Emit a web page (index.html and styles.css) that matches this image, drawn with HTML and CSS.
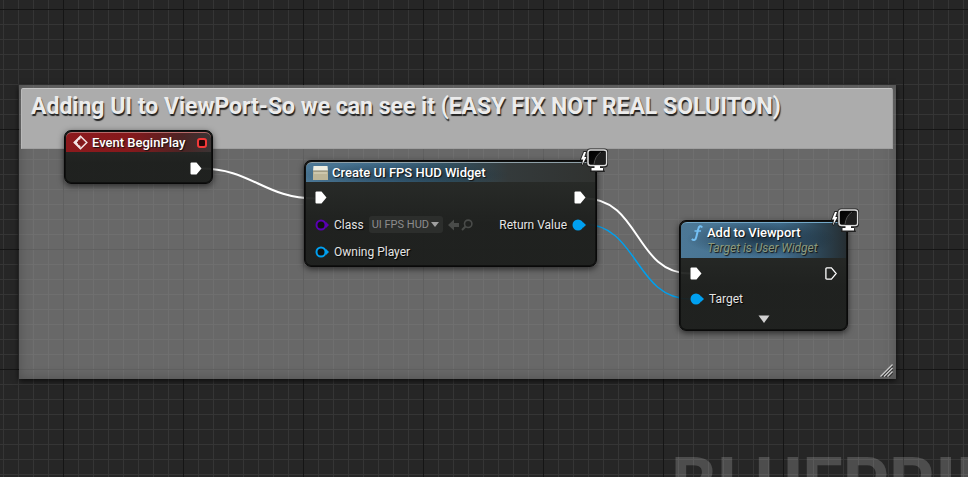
FILE: index.html
```html
<!DOCTYPE html>
<html lang="en">
<head>
<meta charset="utf-8">
<title>Event Graph</title>
<link rel="stylesheet" href="styles.css">
</head>
<body>
<svg class="defs" aria-hidden="true">
  <defs>
    <linearGradient id="screen" x1="0" y1="0" x2="1" y2="1">
      <stop offset="0" stop-color="#000"/><stop offset="1" stop-color="#111"/>
    </linearGradient>
    <symbol id="exec" viewBox="0 0 12 13"><path d="M1.5 .5H6.5L11.500 6.5L6.5 12.5H1.5Q.5 12.5 .5 11.5V1.5Q.5 .5 1.5 .5Z" fill="#fff"/></symbol>
    <symbol id="exec-open" viewBox="0 0 12 13"><path d="M1.8 .9H6.4L11.2 6.5L6.4 12.1H1.8Q.9 12.1 .9 11.2V1.8Q.9 .9 1.8 .9Z" fill="none" stroke="#fff" stroke-width="1.3"/></symbol>
    <symbol id="pin" viewBox="0 0 14 12"><circle cx="6" cy="6" r="5.5" fill="currentColor"/><path d="M10.6 2.8L14 6L10.6 9.2Z" fill="currentColor"/></symbol>
    <symbol id="pin-open" viewBox="0 0 14 12"><circle cx="6" cy="6" r="4.5" fill="#101210" stroke="currentColor" stroke-width="2"/><path d="M10.8 2.8L14 6L10.8 9.2Z" fill="currentColor"/></symbol>
    <symbol id="client" viewBox="0 0 28 24">
      <path d="M4 4L1 11.500H3.200L1.800 17.500L6.500 9H4.300L6 4Z" fill="#fff" stroke="#222" stroke-width="1.800" paint-order="stroke"/>
      <rect x="6.500" y=".5" width="21.500" height="19" rx="3.500" fill="#222"/>
      <path d="M11 19H23L25 24H10Z" fill="#222"/>
      <rect x="8" y="2" width="18.500" height="15.500" rx="2.500" fill="url(#screen)" stroke="#dedede" stroke-width="1.500"/>
      <path d="M14 16.500C14.500 10.500 17 5.500 25.500 3V16.500Z" fill="#1e1e1e"/>
      <path d="M14 16.500C14.500 11 17 6.500 21 4" stroke="#505050" fill="none"/>
      <path d="M14.500 18H20V20H23V22.500H11.500V20H14.500Z" fill="#fff"/>
    </symbol>
  </defs>
</svg>
<main class="graph">
  <div class="watermark">BLUEPRINT</div>
  <section class="comment">
    <h1 class="comment-title">Adding UI to ViewPort-So we can see it (EASY FIX NOT REAL SOLUITON)</h1>
    <svg class="grip" viewBox="0 0 13 13"><path d="M1 12.500L12.500 1M4.500 12.500L12.500 4.500M8 12.500L12.500 8" stroke="#333" stroke-width="1.200" transform="translate(.5 1)"/><path d="M.5 12.500L12.500 .5M4 12.500L12.500 4M7.500 12.500L12.500 7.500" stroke="#ccc" stroke-width="1.200"/></svg>
  </section>

  <svg class="wires" aria-hidden="true">
    <path class="wire" d="M201 168.500C251 168.500 265 198.500 315 198.500"/>
    <path class="wire" d="M585 198.500C640 198.500 635 273.500 690 273.500"/>
    <path class="wire wire-object" d="M583 224C638 224 635 299 690 299"/>
  </svg>

  <article class="node node-event">
    <header class="node-head head-event">
      <svg class="icon-event" viewBox="0 0 15 15"><path d="M7.500 1.200L13.800 7.500L7.500 13.800L1.200 7.500Z" fill="none" stroke="#f2e4e4" stroke-width="1.500"/><path d="M7.500 .8V4L5 5.500V9.500L7.500 11V14.200L.8 7.500Z" fill="#f2e4e4"/><path d="M4 7.500H8" stroke="#7c1a1d" stroke-width="1.600"/><path d="M7 4.500L10 7.500L7 10.500Z" fill="#7c1a1d"/></svg>
      <h2>Event BeginPlay</h2>
      <span class="delegate"></span>
    </header>
    <div class="row row-end"><svg class="exec"><use href="#exec"/></svg></div>
  </article>

  <article class="node node-create">
    <svg class="client"><use href="#client"/></svg>
    <header class="node-head head-create">
      <svg class="icon-box" viewBox="0 0 15 14"><path d="M.5 0H14.500L15 5H0Z" fill="#eeeee2"/><path d="M0 5H15V14H0Z" fill="#bdb698"/><path d="M0 4.500H15V5.500H0Z" fill="#85826e"/><path d="M1 6H14V8H1Z" fill="#cdc7ac"/></svg>
      <h2>Create UI FPS HUD Widget</h2>
    </header>
    <div class="row"><svg class="exec"><use href="#exec"/></svg><svg class="exec exec-out"><use href="#exec"/></svg></div>
    <div class="row">
      <svg class="pin pin-class"><use href="#pin-open"/></svg>
      <label for="widget-class">Class</label>
      <span class="picker">
        <select id="widget-class"><option>UI FPS HUD</option></select>
        <svg class="caret" viewBox="0 0 8 5"><path d="M0 0H8L4 5Z" fill="#a0a0a0"/></svg>
      </span>
      <button class="tool" type="button" aria-label="Use selected"><svg viewBox="0 0 12 12"><path d="M0 6L6 .5V4H11V8H6V11.500Z" fill="#494b49"/></svg></button>
      <button class="tool" type="button" aria-label="Browse"><svg viewBox="0 0 12 12"><circle cx="7.200" cy="4.800" r="3.700" fill="none" stroke="#494b49" stroke-width="1.600"/><path d="M4.500 7.500L1 11" stroke="#494b49" stroke-width="2"/></svg></button>
      <span class="out">Return Value</span>
      <svg class="pin pin-object"><use href="#pin"/></svg>
    </div>
    <div class="row"><svg class="pin pin-object"><use href="#pin-open"/></svg><span>Owning Player</span></div>
  </article>

  <article class="node node-add">
    <svg class="client"><use href="#client"/></svg>
    <header class="node-head head-add">
      <svg class="icon-fn" viewBox="0 0 12 16"><path d="M11.200 2.500C10 .2 7.800 1 7.200 4L5.300 12C4.700 15 2.700 15.800 .8 14" fill="none" stroke="#74c0f4" stroke-width="2"/><path d="M3.500 6H10" stroke="#74c0f4" stroke-width="1.500"/></svg>
      <div><h2>Add to Viewport</h2><p>Target is User Widget</p></div>
    </header>
    <div class="row"><svg class="exec"><use href="#exec"/></svg><svg class="exec exec-out"><use href="#exec-open"/></svg></div>
    <div class="row"><svg class="pin pin-object"><use href="#pin"/></svg><span>Target</span></div>
    <button class="expand" type="button" aria-label="Show more"><svg viewBox="0 0 12 8"><path d="M.5 .5H11.500L6 8Z" fill="#d0d0d0"/></svg></button>
  </article>
</main>
</body>
</html>
```
FILE: styles.css
```css
* { box-sizing: border-box; }

body {
  margin: 0;
  background: #262626;
  color: #e4e4e4;
  font: 12px/16px Roboto, "Liberation Sans", sans-serif;
}

h1, h2, p { margin: 0; }
svg { display: block; flex: none; }
button { padding: 0; border: 0; background: none; }
.defs { position: absolute; width: 0; height: 0; }

.graph {
  position: relative;
  min-height: 100vh;
  overflow: hidden;
  background-image:
    linear-gradient(90deg, #151515 1px, transparent 1px),
    linear-gradient(#151515 1px, transparent 1px),
    linear-gradient(90deg, #353535 1px, transparent 1px),
    linear-gradient(#353535 1px, transparent 1px);
  background-size: 120px 120px, 120px 120px, 15px 15px, 15px 15px;
  background-position: 63px 9px, 63px 9px, 3px 9px, 3px 9px;
}

.watermark {
  position: absolute;
  left: 671px;
  top: 444px;
  color: rgba(255, 255, 255, .18);
  font-size: 72px;
  font-weight: 700;
  line-height: 82px;
}

.comment {
  position: absolute;
  left: 19px;
  top: 85px;
  width: 877px;
  height: 294px;
  padding: 3px 3px 0 2px;
  background: rgba(161, 161, 161, .54);
  box-shadow: 0 2px 6px rgba(0, 0, 0, .7), inset 0 0 12px rgba(50, 50, 50, .45);
}

.comment-title {
  height: 61px;
  padding: 4px 9px;
  border: 1px solid #b9b9b9;
  border-color: #c4c4c4 #a0a0a0 #a0a0a0 #b9b9b9;
  border-radius: 2px 2px 0 0;
  background: #acacac;
  color: #ececec;
  font-size: 23px;
  font-weight: 700;
  line-height: 28px;
  text-shadow: 1px 2px 1px #222;
  white-space: nowrap;
}

.grip {
  position: absolute;
  right: 3px;
  bottom: 2px;
  width: 13px;
  height: 13px;
}

.wires {
  position: absolute;
  inset: 0;
  width: 100%;
  height: 100%;
}

.wire { fill: none; stroke: #fff; stroke-width: 2; }
.wire-object { stroke: #00a0ee; stroke-width: 1.5; }

.node {
  position: absolute;
  padding: 2px;
  border: 1px solid #090909;
  border-radius: 7px;
  background: linear-gradient(rgba(40, 43, 40, .94), rgba(27, 29, 27, .94) 60%);
  box-shadow: 0 2px 6px rgba(0, 0, 0, .6), inset 0 0 0 1px #101110;
}

.node-event { left: 64px; top: 130px; width: 149px; height: 54px; }
.node-create { left: 304px; top: 160px; width: 293px; height: 107px; }
.node-add { left: 679px; top: 220px; width: 169px; height: 111px; }

.node-head {
  display: flex;
  align-items: center;
  gap: 4px;
  height: 20px;
  margin: -1px -1px 3px;
  padding: 0 7px;
  border-top: 1px solid #8a8a8a;
  border-radius: 6px 6px 0 0;
  text-shadow: 1px 1px 1px #111;
  white-space: nowrap;
}

.node-head h2 { font-size: 13px; font-weight: 500; line-height: 16px; color: #fff; }
.node-head p { color: #8c9a7c; font-style: italic; line-height: 14px; }

.head-event {
  border-color: #b56a6a;
  background: linear-gradient(90deg, #8c1a1d 0%, #85191c 45%, #4c2424 80%, #3a3434 100%);
}

.head-create {
  margin-bottom: 2px;
  border-color: #8fa0a8;
  background:
    radial-gradient(ellipse 110px 12px at 95px 12px, rgba(20, 42, 58, .6), transparent),
    linear-gradient(90deg, #4c7896 0%, #3f6a88 30%, #32505f 50%, #343a3b 70%, #303230 100%);
}

.head-add {
  align-items: flex-start;
  height: 36px;
  padding-top: 2px;
  border-color: #74a8c8;
  background:
    radial-gradient(ellipse 75px 18px at 80px 16px, rgba(18, 36, 50, .75), transparent),
    linear-gradient(90deg, #4c7896 0%, #426f90 60%, #2c4352 85%, #262e32 100%);
}

.icon-event { width: 15px; height: 15px; }
.icon-box { width: 15px; height: 14px; }
.icon-fn { width: 12px; height: 16px; margin: 0 0 0 3px; }

.delegate {
  width: 10px;
  height: 10px;
  margin-left: auto;
  border: 2px solid #f43838;
  border-radius: 3px;
  background: #240808;
}
.head-event { padding-right: 4px; }

.row {
  display: flex;
  align-items: center;
  gap: 5px;
  height: 27px;
  padding: 0 8px;
  text-shadow: 1px 1px 1px #000;
  white-space: nowrap;
}

.row-end { justify-content: flex-end; }
.exec { width: 12px; height: 13px; }
.exec-out { margin-left: auto; }
.pin { width: 14px; height: 12px; }
.pin-object { color: #00a0f0; }
.pin-class { color: #5a00b4; }
.out { margin-left: auto; }
.node-add .row { height: 25px; }

.picker {
  position: relative;
  display: flex;
  align-items: center;
}

.picker select {
  appearance: none;
  width: 74px;
  height: 17px;
  padding: 0 3px;
  border: 0;
  border-radius: 3px;
  background: #2c2e2c;
  color: #8c8c8c;
  font: 11px/16px Roboto, sans-serif;
}

.caret {
  position: absolute;
  right: 4px;
  width: 8px;
  height: 5px;
  pointer-events: none;
}

.tool svg { width: 12px; height: 12px; }
.tool + .tool { margin-left: -4px; }

.expand { display: block; margin: 4px auto 0; }
.expand svg { width: 12px; height: 8px; }

.client {
  position: absolute;
  right: -12px;
  top: -13px;
  z-index: 1;
  width: 28px;
  height: 24px;
}
```
